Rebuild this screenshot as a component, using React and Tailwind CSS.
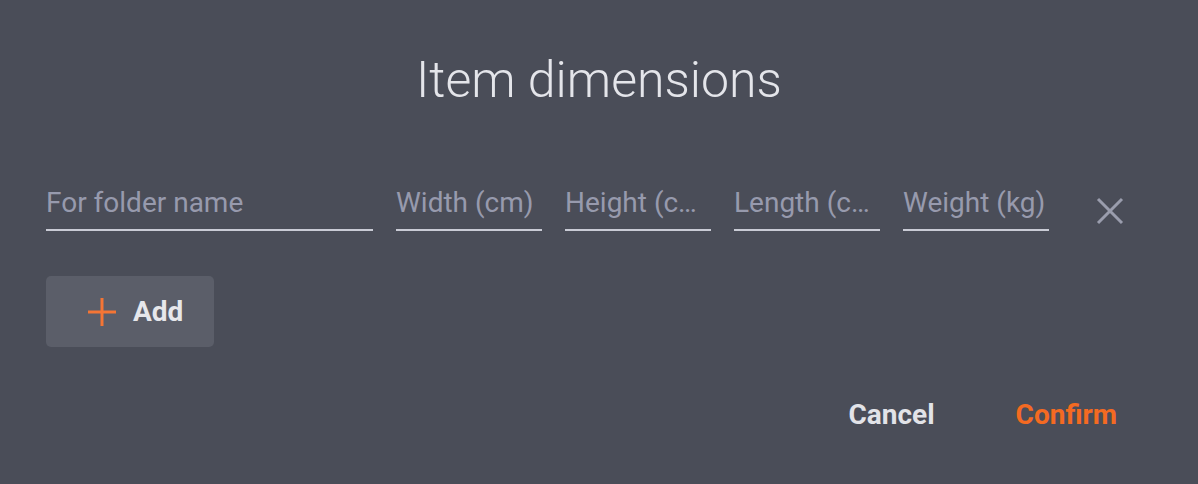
export default function App() {
  const fields = [
    { label: "For folder name", w: "w-[327px]" },
    { label: "Width (cm)", w: "w-[146px]" },
    { label: "Height (c…", w: "w-[146px]" },
    { label: "Length (c…", w: "w-[146px]" },
    { label: "Weight (kg)", w: "w-[146px]" },
  ];
  return (
    <div
      className="w-[1198px] h-[484px] bg-[#4a4d58] px-[46px] overflow-hidden"
      style={{ fontFamily: "Roboto, 'Noto Sans', sans-serif" }}
    >
      <h1 className="pt-[52px] text-center text-[50px] leading-[56px] font-light text-[#e4e5ea]">
        Item dimensions
      </h1>
      <div className="mt-[79px] flex items-end gap-[23px]">
        {fields.map((f) => (
          <div
            key={f.label}
            className={`${f.w} border-b-2 border-[#c9cbd5] pb-[10px] text-[28px] leading-[32px] text-[#979aad] whitespace-nowrap overflow-hidden`}
          >
            {f.label}
          </div>
        ))}
        <div className="ml-[24px] mb-[6px] flex items-center justify-center">
          <svg width="28" height="28" viewBox="0 0 28 28" fill="none">
            <path d="M2 2 L26 26 M26 2 L2 26" stroke="#9a9dad" strokeWidth="3" />
          </svg>
        </div>
      </div>
      <div className="mt-[45px]">
        <button className="w-[168px] h-[71px] rounded-[5px] bg-[#5b5e69] flex items-center pl-[42px]">
          <svg width="28" height="28" viewBox="0 0 28 28" fill="none">
            <path d="M14 0 V28 M0 14 H28" stroke="#f47535" strokeWidth="3" />
          </svg>
          <span className="ml-[17px] text-[28px] leading-[32px] font-bold text-[#e6e7eb]">Add</span>
        </button>
      </div>
      <div className="mt-[52px] mr-[35px] flex justify-end gap-[81px]">
        <span className="text-[28px] leading-[32px] font-bold text-[#e2e3e8]">Cancel</span>
        <span className="text-[28px] leading-[32px] font-bold text-[#f46a22]">Confirm</span>
      </div>
    </div>
  );
}
